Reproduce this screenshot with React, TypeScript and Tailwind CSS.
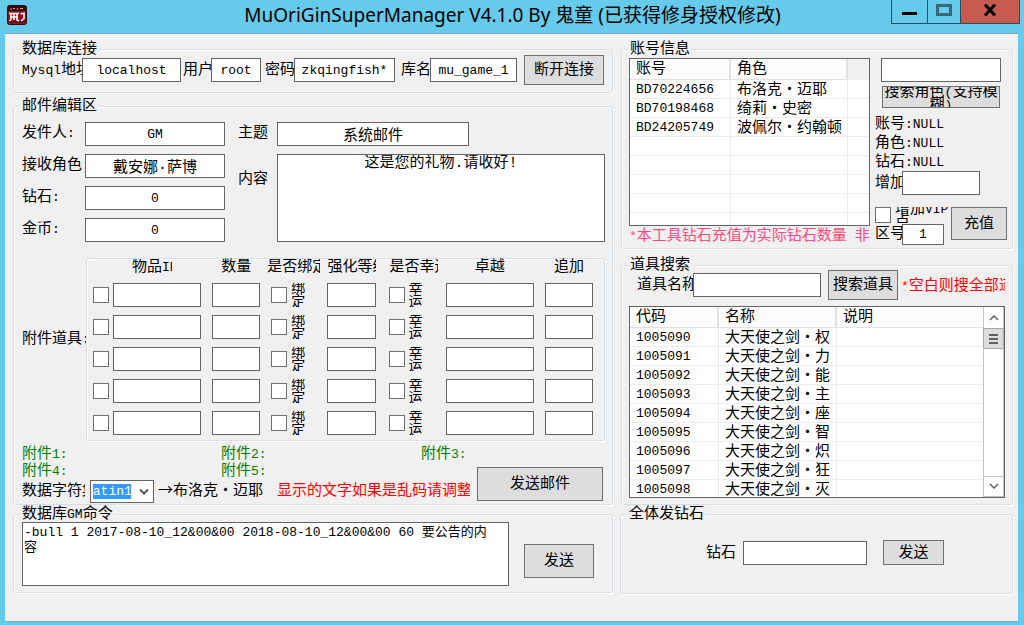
import { useState } from 'react'
import type { ComponentProps, ReactNode } from 'react'

const inputCls = "h-[24px] min-w-0 border border-[#646464] bg-white text-center outline-none rounded-none"
const latin = "text-[13px] pt-px"
const buttonCls = "shrink-0 border border-[#707070] bg-[#dddddd] pt-[2px] overflow-hidden hover:bg-[#e5f1fb]"

const thCls = "h-[21px] border-r-2 border-b border-[#e2e2e2] bg-[#fcfcfc] pt-[2px] pl-[6px] text-left font-normal leading-[18px]"
const tdCls = "h-[19px] border-r border-b border-[#ececec] pl-[6px]"

const characters = [
    { account: 'BD70224656', role: '布洛克·迈耶' },
    { account: 'BD70198468', role: '绮莉·史密' },
    { account: 'BD24205749', role: '波佩尔·约翰顿' },
]

const items = ['权', '力', '能', '主', '座', '智', '炽', '狂', '灭'].map((name, i) => ({
    code: String(1005090 + i),
    name: `大天使之剑·${name}`,
}))

// ASCII runs are set smaller so they stay half the width of a Chinese character
function Txt({ children }: { children: string }) {
    return (
        <>
            {children.split(/([\x20-\x7e]+|·|→)/).filter(Boolean).map((part, i) => {
                if (part === '·' || part === '→') {
                    return <span key={i} className="inline-block w-[15px] text-center font-['Noto_Sans_CJK_SC',sans-serif] leading-none">{part}</span>
                }
                if (/^[\x20-\x7e]+$/.test(part)) return <span key={i} className="text-[13px] whitespace-pre">{part}</span>
                return part
            })}
        </>
    )
}

function Label({ text, htmlFor, className = 'pt-[2px]' }: { text: string; htmlFor: string; className?: string }) {
    return (
        <label htmlFor={htmlFor} className={`block shrink-0 overflow-hidden whitespace-nowrap ${className}`}>
            <Txt>{text}</Txt>
        </label>
    )
}

function Cell({ text = '' }: { text?: string }) {
    return (
        <td className={tdCls}>
            <div className="h-[18px] overflow-hidden leading-[20px] whitespace-nowrap"><Txt>{text}</Txt></div>
        </td>
    )
}

function Group({ title, className = '', children }: { title: string; className?: string; children: ReactNode }) {
    return (
        <fieldset className={`min-w-0 rounded-[3px] border border-[#d5dfe5] px-[7px] shadow-[inset_1px_1px_0_#fff,1px_1px_0_#fff] ${className}`}>
            <legend className="-ml-px h-[18px] bg-[#f0f0f0] px-[2px] leading-[20px]"><Txt>{title}</Txt></legend>
            {children}
        </fieldset>
    )
}

function Check(props: ComponentProps<'input'>) {
    return (
        <input
            type="checkbox"
            {...props}
            className="size-4 shrink-0 appearance-none border border-[#707070] bg-white checked:bg-[#707070] checked:shadow-[inset_0_0_0_3px_#fff]"
        />
    )
}

function TitleBar() {
    return (
        <header className="flex h-[33px] shrink-0 items-start">
            <div className="w-[134px] pt-[5px] pl-[7px]">
                <svg width="20" height="20" viewBox="0 0 20 20">
                    <rect x="0.5" y="0.5" width="19" height="19" rx="2" fill="#8c1620" stroke="#2a0b0d" />
                    <path d="M1 1h18v5H1z" fill="#3a080b" />
                    <path d="M2 16h16v2H2z" fill="#5a0d13" />
                    <path d="M3 4h2M6 3.5h2M9.5 4h2M13 3.5h3" stroke="#d09a9a" strokeWidth="1.2" />
                    <path d="M2 8.5h10M3 12h8M4 8v6.5l-1.5 1.5M7 8v7M10 8v7l2 1M17 7.5v6l-3 2.5M13.5 8.5h4" fill="none" stroke="#fff" strokeWidth="1.5" />
                </svg>
            </div>
            <h1 className="flex-1 text-center font-['Noto_Sans','Noto_Sans_CJK_SC',sans-serif] text-[19px] leading-[31px] whitespace-nowrap">
                MuOriGinSuperManager V4.1.0 By 鬼童 (已获得修身授权修改)
            </h1>
            <div className="mr-[4px] flex h-[24px] border border-t-0 border-[#2c4e5c]">
                <button aria-label="最小化" className="flex w-[36px] items-center justify-center border-r border-[#2c4e5c]">
                    <svg width="15" height="12"><path d="M0 6h15v3H0z" fill="#000" /></svg>
                </button>
                <button aria-label="最大化" className="flex w-[33px] items-start justify-center border-r border-[#2c4e5c] pt-[4px]">
                    <svg width="16" height="12"><path d="M1.5 1.5h13v9h-13z" fill="none" stroke="#36687b" strokeWidth="3" /></svg>
                </button>
                <button aria-label="关闭" className="flex w-[58px] items-start justify-center bg-[#c75b50] pt-[4px]">
                    <svg width="14" height="12"><path d="M2 0.5l10 11M12 0.5l-10 11" stroke="#000" strokeWidth="3" /></svg>
                </button>
            </div>
        </header>
    )
}

function Database() {
    return (
        <Group title="数据库连接" className="pb-[6px]">
            <div className="-mt-1 flex h-[32px] items-center pl-px">
                <Label text="Mysql地址" htmlFor="host" className="w-[60px] pt-[2px]" />
                <input id="host" defaultValue="localhost" className={`${inputCls} ${latin} w-[98px] grow`} />
                <Label text="用户" htmlFor="user" className="ml-[2px] w-[28px] pt-[2px]" />
                <input id="user" defaultValue="root" className={`${inputCls} ${latin} w-[49px] grow`} />
                <Label text="密码" htmlFor="password" className="ml-[4px] w-[29px] pt-[2px]" />
                <input id="password" defaultValue="zkqingfish*" className={`${inputCls} ${latin} w-[100px] grow`} />
                <Label text="库名" htmlFor="dbname" className="ml-[6px] w-[29px] pt-[2px]" />
                <input id="dbname" defaultValue="mu_game_1" className={`${inputCls} ${latin} w-[86px] grow`} />
                <button className={`${buttonCls} mr-px ml-[7px] h-[30px] w-[80px]`}>断开连接</button>
            </div>
        </Group>
    )
}

function AttachmentRow({ index }: { index: number }) {
    const small = "w-[14px] h-[24px] overflow-hidden break-all text-[14px] leading-[13px]"

    return (
        <>
            <div className="flex items-center gap-1">
                <Check aria-label={`附件${index}`} />
                <input aria-label="物品ID" className={`${inputCls} grow w-[88px]`} />
            </div>
            <input aria-label="数量" className={`${inputCls} w-full`} />
            <label className="flex items-center gap-1">
                <Check />
                <span className={small}>绑定</span>
            </label>
            <input aria-label="强化等级" className={`${inputCls} w-full`} />
            <label className="flex items-center gap-1 pl-[2px]">
                <Check />
                <span className={small}>幸运</span>
            </label>
            <input aria-label="卓越" className={`${inputCls} w-full`} />
            <input aria-label="追加" className={`${inputCls} w-full`} />
        </>
    )
}

function Mail() {
    const [charset, setCharset] = useState('latin1')

    return (
        <Group title="邮件编辑区" className="mt-[4px]">
            <div className="flex pt-[7px] pl-px">
                <div className="grid shrink-0 grid-cols-[63px_140px] gap-y-2">
                    <Label text="发件人:" htmlFor="sender" />
                    <input id="sender" defaultValue="GM" className={`${inputCls} ${latin}`} />
                    <Label text="接收角色:" htmlFor="receiver" />
                    <input id="receiver" defaultValue="戴安娜·萨博" className={inputCls} />
                    <Label text="钻石:" htmlFor="diamond" />
                    <input id="diamond" defaultValue="0" className={`${inputCls} ${latin}`} />
                    <Label text="金币:" htmlFor="gold" />
                    <input id="gold" defaultValue="0" className={`${inputCls} ${latin}`} />
                </div>
                <div className="ml-[13px] grid flex-1 grid-cols-[39px_1fr] grid-rows-[24px_88px] gap-y-2">
                    <Label text="主题" htmlFor="subject" />
                    <input id="subject" defaultValue="系统邮件" className={`${inputCls} w-[192px]`} />
                    <Label text="内容" htmlFor="content" className="pt-[16px]" />
                    <textarea id="content" defaultValue="这是您的礼物.请收好!" className="resize-none border border-[#646464] bg-white pt-px text-center leading-[16px] outline-none" />
                </div>
            </div>

            <div className="mt-[16px] flex items-center pl-px">
                <div className="w-[64px] shrink-0 overflow-hidden pb-[20px] whitespace-nowrap"><Txt>附件道具:</Txt></div>
                <div className="flex-1 rounded-[3px] border border-[#d5dfe5] pr-[11px] pb-[5px] pl-[6px] shadow-[inset_1px_1px_0_#fff,1px_1px_0_#fff]">
                    <div className="grid grid-cols-[108fr_48fr_45fr_48fr_48fr_88fr_48fr] gap-x-[11px] gap-y-2">
                        <span className="-mb-[2px] ml-[39px] w-[40px] overflow-hidden leading-[18px] whitespace-nowrap"><Txt>物品ID</Txt></span>
                        <span className="-mb-[2px] text-center leading-[18px]">数量</span>
                        <span className="-mx-[4px] -mb-[2px] overflow-hidden leading-[18px] whitespace-nowrap">是否绑定</span>
                        <span className="-mb-[2px] overflow-hidden leading-[18px] whitespace-nowrap">强化等级</span>
                        <span className="-mr-[3px] -mb-[2px] ml-[3px] overflow-hidden leading-[18px] whitespace-nowrap">是否幸运</span>
                        <span className="-mb-[2px] text-center leading-[18px]">卓越</span>
                        <span className="-mb-[2px] text-center leading-[18px]">追加</span>
                        {[1, 2, 3, 4, 5].map(n => <AttachmentRow key={n} index={n} />)}
                    </div>
                </div>
            </div>

            <div className="mt-[5px] grid grid-cols-[199fr_200fr_184fr] pl-px leading-[17px] text-[#008000]">
                <span><Txt>附件1:</Txt></span>
                <span><Txt>附件2:</Txt></span>
                <span><Txt>附件3:</Txt></span>
            </div>
            <div className="flex pb-px pl-px">
                <div className="min-w-0 flex-1">
                    <div className="flex leading-[17px] text-[#008000]">
                        <span className="w-[199px]"><Txt>附件4:</Txt></span>
                        <span><Txt>附件5:</Txt></span>
                    </div>
                    <div className="flex h-[23px] items-center">
                        <Label text="数据字符集" htmlFor="charset" className="w-[63px]" />
                        <div className="relative ml-[5px] shrink-0">
                            <select
                                id="charset"
                                value={charset}
                                onChange={(e) => setCharset(e.target.value)}
                                className="block h-[23px] w-[64px] appearance-none border border-[#646464] bg-white bg-[linear-gradient(#3399ff,#3399ff)] bg-[length:38px_15px] bg-[position:2px_3px] bg-no-repeat pr-[22px] indent-[-6px] text-[13px] text-white outline-none"
                            >
                                <option value="latin1">latin1</option>
                                <option value="utf8">utf8</option>
                                <option value="gbk">gbk</option>
                            </select>
                            <svg width="10" height="8" className="pointer-events-none absolute top-[8px] right-[5px]">
                                <path d="M1 1.5l4 4 4-4" fill="none" stroke="#555" strokeWidth="2" />
                            </svg>
                        </div>
                        <span className="ml-[4px] shrink-0 whitespace-nowrap"><Txt>→布洛克·迈耶</Txt></span>
                        <span className="ml-[14px] min-w-0 overflow-hidden whitespace-nowrap text-[#ff0000]">显示的文字如果是乱码请调整</span>
                    </div>
                </div>
                <button className={`${buttonCls} mt-[4px] mr-[2px] ml-[7px] h-[34px] w-[126px]`}>发送邮件</button>
            </div>
        </Group>
    )
}

function GmCommand() {
    return (
        <Group title="数据库GM命令" className="pb-[6px]">
            <div className="-mt-px flex items-center pl-px">
                <textarea
                    aria-label="数据库GM命令"
                    defaultValue="-bull 1 2017-08-10_12&00&00 2018-08-10_12&00&00 60 要公告的内容"
                    className="h-[64px] min-w-0 flex-1 resize-none border border-[#646464] bg-white pt-[2px] pr-[16px] pl-px text-[13px] leading-[15px] outline-none"
                />
                <button className={`${buttonCls} mt-[14px] mr-[11px] ml-[15px] h-[34px] w-[70px]`}>发送</button>
            </div>
        </Group>
    )
}

function Accounts() {
    return (
        <Group title="账号信息">
            <div className="-mr-[2px] flex pb-[2px]">
                <div className="min-w-0 flex-1">
                    <div className="h-[168px] overflow-hidden border border-[#646464] bg-white">
                        <table className="w-full table-fixed border-separate border-spacing-0">
                            <thead>
                                <tr>
                                    <th className={`${thCls} w-[101px]`}>账号</th>
                                    <th className={`${thCls} w-[117px]`}>角色</th>
                                    <th className="bg-[#f0f0f0]"></th>
                                </tr>
                            </thead>
                            <tbody>
                                {characters.map(({ account, role }) => (
                                    <tr key={account}>
                                        <Cell text={account} />
                                        <Cell text={role} />
                                        <td className="border-b border-[#ececec]"></td>
                                    </tr>
                                ))}
                                {[...Array(5).keys()].map(i => (
                                    <tr key={i}>
                                        <Cell />
                                        <Cell />
                                        <td className="border-b border-[#ececec]"></td>
                                    </tr>
                                ))}
                            </tbody>
                        </table>
                    </div>
                    <p className="h-[20px] overflow-hidden leading-[22px] whitespace-nowrap text-[#ff4a80]"><Txt>*本工具钻石充值为实际钻石数量 非充值</Txt></p>
                </div>
                <div className="ml-[5px] flex w-[132px] shrink-0 flex-col">
                    <input aria-label="角色名" className={`${inputCls} ml-[6px] w-[120px] text-left`} />
                    <button className="mt-[4px] ml-[7px] flex h-[22px] w-[118px] shrink-0 items-center justify-center overflow-hidden border border-[#707070] bg-[#dddddd] pt-[3px] leading-[13px] hover:bg-[#e5f1fb]">
                        <span><Txt>搜索角色(支持模糊)</Txt></span>
                    </button>
                    <p className="mt-[7px] leading-[19px]"><Txt>账号:NULL</Txt></p>
                    <p className="leading-[19px]"><Txt>角色:NULL</Txt></p>
                    <p className="leading-[19px]"><Txt>钻石:NULL</Txt></p>
                    <div className="-mt-px flex items-center">
                        <Label text="增加" htmlFor="amount" className="w-[27px] pt-[2px]" />
                        <input id="amount" className={`${inputCls} w-[78px]`} />
                    </div>
                    <div className="mt-[12px] flex items-start justify-between">
                        <div>
                            <label className="flex gap-[4px]">
                                <Check />
                                <span className="flex h-[16px] w-[54px] items-center overflow-hidden pt-[2px] leading-[13px]">
                                    <span><Txt>增加VIP点</Txt></span>
                                </span>
                            </label>
                            <div className="mt-px flex items-center">
                                <Label text="区号" htmlFor="zone" className="w-[27px] pt-px" />
                                <input id="zone" defaultValue="1" className="h-[21px] w-[42px] border border-[#646464] bg-white text-center text-[13px] outline-none" />
                            </div>
                        </div>
                        <button className={`${buttonCls} h-[33px] w-[56px]`}>充值</button>
                    </div>
                </div>
            </div>
        </Group>
    )
}

function ItemSearch() {
    return (
        <Group title="道具搜索" className="mt-[7px] pb-[6px]">
            <div className="-mt-[4px] flex h-[30px] items-center pl-[8px]">
                <Label text="道具名称" htmlFor="item" className="w-[56px] pt-[2px]" />
                <input id="item" className={`${inputCls} w-[127px] grow text-left`} />
                <button className={`${buttonCls} ml-[7px] h-[30px] w-[70px]`}>
                    <span className="-mx-1 whitespace-nowrap">搜索道具</span>
                </button>
                <span className="ml-[3px] w-[104px] shrink-0 overflow-hidden pt-[4px] whitespace-nowrap text-[#ff0000]"><Txt>*空白则搜全部道具</Txt></span>
            </div>
            <div className="mt-[6px] flex h-[192px] overflow-hidden border border-[#646464] bg-white">
                <div className="min-w-0 flex-1">
                    <table className="w-full table-fixed border-separate border-spacing-0">
                        <thead>
                            <tr>
                                <th className={`${thCls} w-[89px]`}>代码</th>
                                <th className={`${thCls} w-[118px]`}>名称</th>
                                <th className="border-b border-[#e2e2e2] bg-[#fcfcfc] pt-[2px] pl-[6px] text-left leading-[18px] font-normal">说明</th>
                            </tr>
                        </thead>
                        <tbody>
                            {items.map(({ code, name }) => (
                                <tr key={code}>
                                    <Cell text={code} />
                                    <Cell text={name} />
                                    <td className="border-b border-[#ececec]"></td>
                                </tr>
                            ))}
                        </tbody>
                    </table>
                </div>
                <div className="flex w-[21px] shrink-0 flex-col border-x border-[#c4c4c4]">
                    <button aria-label="向上" className="flex h-[21px] items-center justify-center">
                        <svg width="10" height="7"><path d="M1 6l4-4 4 4" fill="none" stroke="#606060" strokeWidth="1.5" /></svg>
                    </button>
                    <div className="-mx-px flex h-[21px] items-center justify-center border border-[#a8a8a8] bg-[#dddddd]">
                        <svg width="9" height="10"><path d="M0 1h9M0 5h9M0 9h9" stroke="#606060" strokeWidth="2" /></svg>
                    </div>
                    <button aria-label="向下" className="mt-auto flex h-[21px] items-center justify-center border-y border-[#c4c4c4]">
                        <svg width="10" height="7"><path d="M1 1l4 4 4-4" fill="none" stroke="#606060" strokeWidth="1.5" /></svg>
                    </button>
                </div>
            </div>
        </Group>
    )
}

function SendAll() {
    return (
        <Group title="全体发钻石" className="-ml-px h-[89px]">
            <div className="mt-[17px] flex items-center justify-center pl-[17px]">
                <Label text="钻石" htmlFor="all" className="w-[37px] pt-[2px]" />
                <input id="all" className={`${inputCls} w-[124px]`} />
                <button className={`${buttonCls} ml-[16px] h-[25px] w-[61px]`}>发送</button>
            </div>
        </Group>
    )
}

export default function App() {
    return (
        <div className="flex min-h-screen flex-col bg-[#66caea] font-['Liberation_Mono','Noto_Sans_CJK_SC',monospace] text-[15px] leading-[20px] text-black">
            <TitleBar />
            <main className="mr-[6px] mb-[3px] ml-[5px] grid flex-1 grid-cols-[600fr_392fr] content-start gap-x-[8px] border-y border-[#7ba5bd] bg-[#f0f0f0] pt-[6px] pr-[5px] pl-[8px]">
                <div className="min-w-0">
                    <Database />
                    <Mail />
                    <GmCommand />
                </div>
                <div className="min-w-0">
                    <Accounts />
                    <ItemSearch />
                    <SendAll />
                </div>
            </main>
        </div>
    )
}
